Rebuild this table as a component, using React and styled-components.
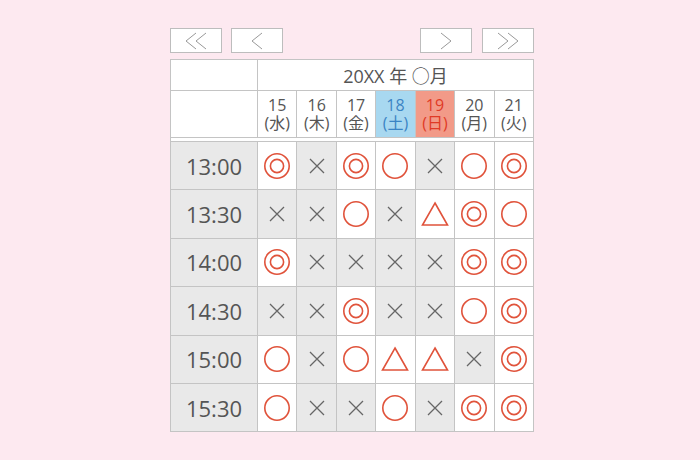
import React from "react";
import styled, { createGlobalStyle } from "styled-components";

const GlobalStyle = createGlobalStyle`
    body {
        margin: 0;
        background: #fde9f0;
        font-family: "Open Sans", "Noto Sans CJK JP", sans-serif;
    }
`;

const Page = styled.div`
    width: 700px;
    height: 460px;
    padding: 28px 0 0 170px;
    box-sizing: border-box;
`;

const Wrap = styled.div`
    width: 364px;
`;

const NavRow = styled.div`
    display: flex;
    justify-content: space-between;
    margin-bottom: 6px;
`;

const NavGroup = styled.div`
    display: flex;
    gap: ${(p) => p.$gap}px;
`;

const NavButton = styled.button`
    width: 52px;
    height: 25px;
    padding: 0;
    background: #fff;
    border: 1px solid #bdbdbd;
    display: flex;
    align-items: center;
    justify-content: center;
    cursor: pointer;
`;

const Table = styled.table`
    width: 364px;
    border-collapse: collapse;
    table-layout: fixed;
    background: #fff;
    color: #555;
`;

const MonthCell = styled.th`
    height: 30px;
    padding: 0;
    border: 1px solid #c4c4c4;
    font-weight: normal;
    font-size: 18px;
    text-align: center;
`;

const DayCell = styled.th`
    height: 46px;
    padding: 0;
    border: 1px solid #c4c4c4;
    font-weight: normal;
    font-size: 16px;
    line-height: 19px;
    text-align: center;
    background: ${(p) => (p.$tone === "sat" ? "#a8d8f0" : p.$tone === "sun" ? "#f29a88" : "#fff")};
    color: ${(p) => (p.$tone === "sat" ? "#3b84c4" : p.$tone === "sun" ? "#e03a26" : "#555")};
`;

const DayLine = styled.span`
    display: block;
    line-height: 18px;
`;

const Spacer = styled.td`
    height: 3px;
    padding: 0;
    border: 1px solid #c4c4c4;
`;

const TimeCell = styled.td`
    height: 47.4px;
    padding: 0;
    border: 1px solid #c4c4c4;
    background: #e9e9e9;
    font-size: 22px;
    text-align: center;
`;

const MarkCell = styled.td`
    padding: 0;
    border: 1px solid #c4c4c4;
    background: ${(p) => (p.$closed ? "#e9e9e9" : "#fff")};
    text-align: center;
    vertical-align: middle;
    svg {
        display: block;
        margin: 0 auto;
    }
`;

const RED = "#e0533b";

const Chevrons = ({ dir, count }) => {
    const pts = [];
    for (let i = 0; i < count; i++) {
        const x = 2 + i * 10;
        pts.push(dir === "left" ? `${x + 10},1 ${x},9 ${x + 10},17` : `${x},1 ${x + 10},9 ${x},17`);
    }
    const w = count === 2 ? 24 : 14;
    return (
        <svg width={w} height="18" viewBox={`0 0 ${w} 18`}>
            {pts.map((p) => (
                <polyline key={p} points={p} fill="none" stroke="#999" strokeWidth="1" />
            ))}
        </svg>
    );
};

const Mark = ({ type }) => {
    if (type === "◎")
        return (
            <svg width="28" height="28" viewBox="0 0 28 28">
                <circle cx="14" cy="14" r="12.2" fill="none" stroke={RED} strokeWidth="1.6" />
                <circle cx="14" cy="14" r="6.6" fill="none" stroke={RED} strokeWidth="1.6" />
            </svg>
        );
    if (type === "○")
        return (
            <svg width="28" height="28" viewBox="0 0 28 28">
                <circle cx="14" cy="14" r="12.2" fill="none" stroke={RED} strokeWidth="1.6" />
            </svg>
        );
    if (type === "△")
        return (
            <svg width="28" height="28" viewBox="0 0 28 28">
                <polygon points="14,3 26.5,25 1.5,25" fill="none" stroke={RED} strokeWidth="1.6" />
            </svg>
        );
    return (
        <svg width="18" height="18" viewBox="0 0 18 18">
            <path d="M2 2 L16 16 M16 2 L2 16" stroke="#666" strokeWidth="1.3" />
        </svg>
    );
};

const days = [
    ["15", "水"],
    ["16", "木"],
    ["17", "金"],
    ["18", "土", "sat"],
    ["19", "日", "sun"],
    ["20", "月"],
    ["21", "火"],
];

const rows = [
    ["13:00", "◎×◎○×○◎"],
    ["13:30", "××○×△◎○"],
    ["14:00", "◎××××◎◎"],
    ["14:30", "××◎××○◎"],
    ["15:00", "○×○△△×◎"],
    ["15:30", "○××○×◎◎"],
];

const App = () => (
    <Page>
        <GlobalStyle />
        <Wrap>
            <NavRow>
                <NavGroup $gap={9}>
                    <NavButton aria-label="前の週">
                        <Chevrons dir="left" count={2} />
                    </NavButton>
                    <NavButton aria-label="前の日">
                        <Chevrons dir="left" count={1} />
                    </NavButton>
                </NavGroup>
                <NavGroup $gap={10}>
                    <NavButton aria-label="次の日">
                        <Chevrons dir="right" count={1} />
                    </NavButton>
                    <NavButton aria-label="次の週">
                        <Chevrons dir="right" count={2} />
                    </NavButton>
                </NavGroup>
            </NavRow>
            <Table>
                <colgroup>
                    <col style={{ width: 87 }} />
                    {days.map((d) => (
                        <col key={d[0]} />
                    ))}
                </colgroup>
                <thead>
                    <tr>
                        <MonthCell />
                        <MonthCell colSpan={7}>20XX 年 ○月</MonthCell>
                    </tr>
                    <tr>
                        <DayCell />
                        {days.map(([n, w, tone]) => (
                            <DayCell key={n} $tone={tone}>
                                <DayLine>{n}</DayLine>
                                <DayLine>({w})</DayLine>
                            </DayCell>
                        ))}
                    </tr>
                </thead>
                <tbody>
                    <tr>
                        <Spacer colSpan={8} />
                    </tr>
                    {rows.map(([time, marks]) => (
                        <tr key={time}>
                            <TimeCell>{time}</TimeCell>
                            {[...marks].map((m, i) => (
                                <MarkCell key={i} $closed={m === "×"}>
                                    <Mark type={m} />
                                </MarkCell>
                            ))}
                        </tr>
                    ))}
                </tbody>
            </Table>
        </Wrap>
    </Page>
);

export default App;
